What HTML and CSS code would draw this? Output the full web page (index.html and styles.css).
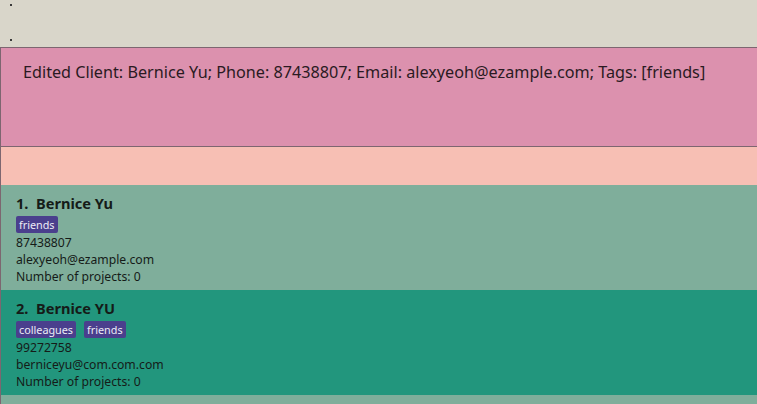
FILE: index.html
```html
<!DOCTYPE html>
<html>
<head>
<meta charset="utf-8">
<link rel="stylesheet" href="styles.css">
</head>
<body>
<div class="menubar">
  <span class="dot dot-a"></span>
  <span class="dot dot-b"></span>
</div>
<div class="main">
  <div class="result">Edited Client: Bernice Yu; Phone: 87438807; Email: alexyeoh@ezample.com; Tags: [friends]</div>
  <div class="status"></div>
  <div class="list">
    <div class="card card-light">
      <div class="title"><span class="idx">1.</span>Bernice Yu</div>
      <div class="tags"><span class="tag">friends</span></div>
      <div class="line">87438807</div>
      <div class="line">alexyeoh@ezample.com</div>
      <div class="line">Number of projects: 0</div>
    </div>
    <div class="card card-dark">
      <div class="title"><span class="idx">2.</span>Bernice YU</div>
      <div class="tags"><span class="tag">colleagues</span><span class="tag">friends</span></div>
      <div class="line">99272758</div>
      <div class="line">berniceyu@com.com.com</div>
      <div class="line">Number of projects: 0</div>
    </div>
  </div>
</div>
</body>
</html>
```
FILE: styles.css
```css
html, body {
  margin: 0;
  padding: 0;
}
body {
  width: 757px;
  height: 404px;
  overflow: hidden;
  background: #d9d6ca;
  font-family: "Noto Sans", "Open Sans", sans-serif;
  color: #1c1c1c;
}
.menubar {
  height: 47px;
  display: flex;
  flex-direction: column;
  justify-content: space-between;
  padding: 4px 0 6px 10px;
  box-sizing: border-box;
}
.dot {
  display: block;
  width: 2px;
  height: 2px;
  background: #3a3a3a;
}
.main {
  border-left: 1px solid #7d6670;
}
.result {
  height: 100px;
  box-sizing: border-box;
  border-top: 1px solid #7d6670;
  border-bottom: 1px solid #7d6670;
  background: #dc91ae;
  padding: 13px 0 0 22px;
  font-size: 16.2px;
  color: #2a1a22;
}
.status {
  height: 38px;
  background: #f7bfb4;
}
.list {
  height: 219px;
  background: #7fae9b;
}
.card {
  height: 105px;
  box-sizing: border-box;
  padding: 8px 0 0 15px;
}
.card-light { background: #7fae9b; }
.card-dark { background: #22967d; }
.title {
  font-weight: bold;
  font-size: 14.6px;
  line-height: 20px;
  color: #151b18;
}
.idx {
  display: inline-block;
  width: 20px;
}
.tags {
  display: flex;
  gap: 8px;
  margin: 3px 0 1px 0;
}
.tag {
  background: #4a3f8d;
  color: #ecebf5;
  font-size: 10.8px;
  line-height: 17px;
  padding: 0 3px;
  border-radius: 2px;
}
.line {
  font-size: 12.2px;
  line-height: 17px;
  color: #151b18;
}
```
